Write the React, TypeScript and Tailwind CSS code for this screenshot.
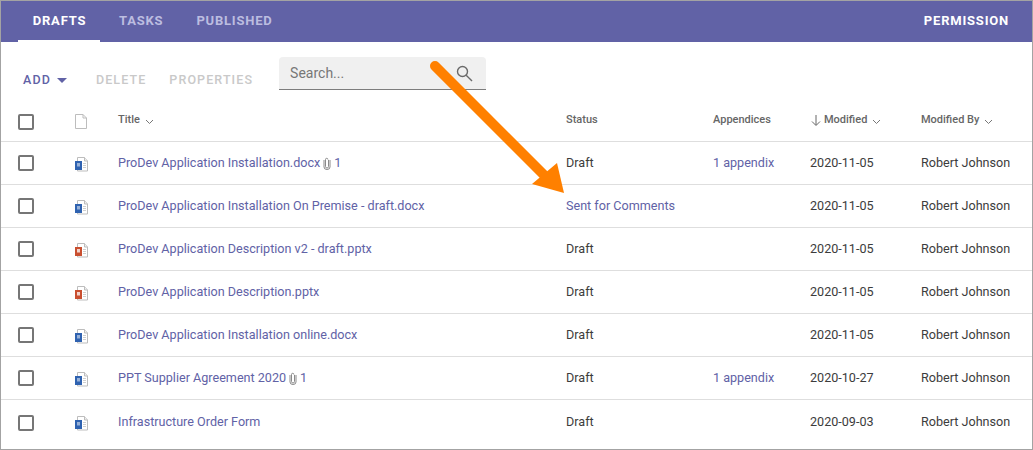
const rows = [
  { name: "ProDev Application Installation.docx", clip: true, type: "w", status: "Draft", app: "1 appendix", date: "2020-11-05" },
  { name: "ProDev Application Installation On Premise - draft.docx", type: "w", status: "Sent for Comments", app: "", date: "2020-11-05" },
  { name: "ProDev Application Description v2 - draft.pptx", type: "p", status: "Draft", app: "", date: "2020-11-05" },
  { name: "ProDev Application Description.pptx", type: "p", status: "Draft", app: "", date: "2020-11-05" },
  { name: "ProDev Application Installation online.docx", type: "w", status: "Draft", app: "", date: "2020-11-05" },
  { name: "PPT Supplier Agreement 2020", clip: true, type: "w", status: "Draft", app: "1 appendix", date: "2020-10-27" },
  { name: "Infrastructure Order Form", type: "w", status: "Draft", app: "", date: "2020-09-03" },
];

function Chevron() {
  return (
    <svg width="9" height="6" viewBox="0 0 9 6" className="ml-[5px] mt-[2px]" fill="none" stroke="#777" strokeWidth="1">
      <path d="M1 1l3.500 3.500L8 1" />
    </svg>
  );
}

function FileIcon({ type }: { type: string }) {
  const color = type === "w" ? "#2f62b0" : "#c94f30";
  return (
    <svg width="14" height="15" viewBox="0 0 14 15" className="mt-[2px] block">
      <path d="M2.500 .5h7l3 3.500v10h-10z" fill="#fff" stroke="#bdbdbd" />
      <path d="M9.500 .5v3.500h3" fill="#eee" stroke="#bdbdbd" />
      <path d="M8 6.500h3M8 8.500h3M8 10.500h3" stroke="#cfcfcf" />
      <rect x="0" y="4" width="7" height="9" fill={color} />
      <rect x="2" y="6" width="3" height="3.500" fill="#fff" opacity={type === "w" ? 0.5 : 0.75} />
    </svg>
  );
}

function Clip() {
  return (
    <svg width="8" height="13" viewBox="0 0 8 13" fill="none" stroke="#8a8a8a" strokeWidth="1" className="mx-[3px] mt-[1px]">
      <path d="M5.500 3v6.500a1.500 1.500 0 0 1-3 0V2.500a1.200 1.200 0 0 1 2.400 0" />
      <path d="M7 3v7a3 2.500 0 0 1-6 0V3" />
    </svg>
  );
}

function Checkbox() {
  return <div className="h-4 w-4 rounded-[2px] border-2 border-[#767676] bg-white" />;
}

const cols = "grid grid-cols-[57px_43px_448px_147px_97px_111px_1fr] items-center pl-[17px]";

export default function App() {
  return (
    <div
      className="relative h-[450px] w-[1033px] overflow-hidden border border-[#a3a3a3] bg-white text-[12.600px] text-[#3c3c3c]"
      style={{ fontFamily: "Roboto, 'Liberation Sans', sans-serif" }}
    >
      <header className="flex h-[41px] items-stretch justify-between bg-[#6162a6] pl-[17px] pr-[23px] text-[13px] font-bold tracking-[0.800px]">
        <nav className="flex">
          <div className="flex w-[82px] items-center justify-center border-b-2 border-white pl-[1px] pt-[1px] text-white">DRAFTS</div>
          <div className="ml-[19px] flex items-center pb-[1px] text-[#bcbde0]">TASKS</div>
          <div className="ml-[33px] flex items-center pb-[1px] text-[#bcbde0]">PUBLISHED</div>
        </nav>
        <div className="flex items-center pb-[1px] text-white">PERMISSION</div>
      </header>

      <div className="flex h-[60px] items-start pl-[22px]">
        <div className="mt-[29px] flex items-center text-[12.500px] font-medium tracking-[1.100px] text-[#6162a6]">
          ADD
          <svg width="10" height="5" viewBox="0 0 10 5" className="ml-[6px]"><path d="M0 0h10L5 5z" fill="#6162a6" /></svg>
        </div>
        <div className="ml-[29px] mt-[29px] text-[12.500px] font-medium tracking-[1.100px] text-[#c9c9c9]">DELETE</div>
        <div className="ml-[23px] mt-[29px] text-[12.500px] font-medium tracking-[1.100px] text-[#c9c9c9]">PROPERTIES</div>
        <div className="ml-[26px] mt-[15px] flex h-[33px] w-[207px] items-center justify-between rounded-t-[4px] border-b border-[#7d7d7d] bg-[#f0f0f0] pl-[11px] pr-[13px]">
          <span className="text-[14px] text-[#777]">Search...</span>
          <svg width="17" height="17" viewBox="0 0 17 17" fill="none" stroke="#6a6a6a" strokeWidth="1.400">
            <circle cx="6.500" cy="6.500" r="5" />
            <path d="M10.200 10.200L16 16" />
          </svg>
        </div>
      </div>

      <div className={`${cols} h-10 border-b border-[#dedede] text-[11px] font-medium text-[#666]`}>
        <Checkbox />
        <svg width="12" height="15" viewBox="0 0 12 15" fill="none" stroke="#bdbdbd"><path d="M.5 .5h7.500l3.500 3.500v10.500h-11z" /><path d="M8 .5v3.500h3.500" /></svg>
        <div className="flex items-center pb-[2px]">Title<Chevron /></div>
        <div className="pb-[2px]">Status</div>
        <div className="pb-[2px]">Appendices</div>
        <div className="flex items-center pb-[2px]">
          <svg width="10" height="11" viewBox="0 0 10 11" fill="none" stroke="#666" className="ml-[1px] mr-[3px]"><path d="M5 0v10M1 6.500L5 10.500 9 6.500" /></svg>
          Modified<Chevron />
        </div>
        <div className="flex items-center pb-[2px]">Modified By<Chevron /></div>
      </div>

      <div>
        {rows.map((r) => (
          <div key={r.name} className={`${cols} h-[43px] border-b border-[#dedede] last:border-b-0 last:pt-[2px]`}>
            <Checkbox />
            <FileIcon type={r.type} />
            <div className="flex items-center text-[#6162a6]">
              {r.name}
              {r.clip && <><Clip />1</>}
            </div>
            <div className={r.status === "Draft" ? "text-[#3c3c3c]" : "text-[#6162a6]"}>{r.status}</div>
            <div className="text-[#6162a6]">{r.app}</div>
            <div>{r.date}</div>
            <div className="whitespace-nowrap">Robert Johnson</div>
          </div>
        ))}
      </div>

      <svg className="pointer-events-none absolute left-0 top-0" width="1033" height="450" viewBox="0 0 1033 450">
        <path d="M434 65L547 178" stroke="#ff8000" strokeWidth="10" strokeLinecap="round" />
        <path d="M563 192L531 183L556 162z" fill="#ff8000" />
      </svg>
    </div>
  );
}
